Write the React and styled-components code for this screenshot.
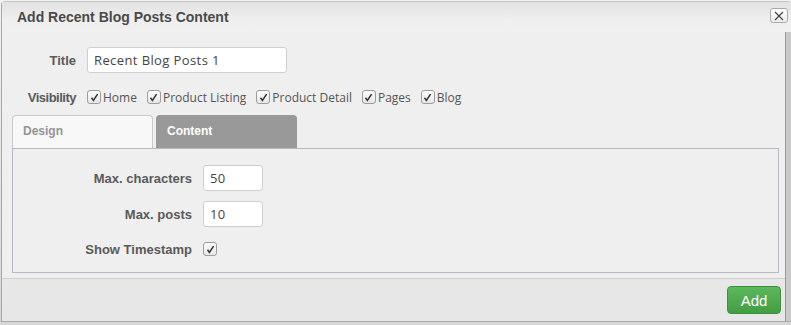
import React from "react";
import styled, { createGlobalStyle } from "styled-components";

const GlobalStyle = createGlobalStyle`
  html, body {
    margin: 0;
    padding: 0;
    background: #dcdcdc;
  }
  body {
    font-family: "Open Sans", "Liberation Sans", sans-serif;
    color: #444;
  }
`;

const Page = styled.div`
  width: 791px;
  height: 325px;
  overflow: hidden;
  padding-top: 1px;
  box-sizing: border-box;
  background: linear-gradient(#f2f2f2, #d6d6d6);
`;

const Dialog = styled.div`
  margin-left: 1px;
  width: 790px;
  height: 321px;
  display: flex;
  flex-direction: column;
  border-left: 1px solid #a8a8a8;
  border-top: 1px solid #c4c4c4;
  border-bottom: 1px solid #a8a8a8;
  border-radius: 4px 4px 0 0;
  background: #efefef;
  box-sizing: border-box;
`;

const Header = styled.div`
  height: 30px;
  display: flex;
  align-items: center;
  padding: 0 3px 0 15px;
  background: linear-gradient(#e2e2e2, #efefef 60%, #f0f0f0);
`;

const HeaderTitle = styled.div`
  font-family: "Liberation Sans", Arial, sans-serif;
  font-weight: bold;
  font-size: 14px;
  color: #4a4a4a;
  margin-top: -1px;
`;

const CloseButton = styled.button`
  margin-left: auto;
  width: 18px;
  height: 15px;
  padding: 0;
  display: flex;
  align-items: center;
  justify-content: center;
  border: 1px solid #aaa;
  border-radius: 3px;
  background: linear-gradient(#fff, #ececec);
  align-self: flex-start;
  margin-top: 6px;
`;

const Row = styled.div`
  flex: 1;
  display: flex;
`;

const Main = styled.div`
  flex: 1;
  display: flex;
  flex-direction: column;
`;

const Gutter = styled.div`
  width: 6px;
  background: linear-gradient(90deg, #9a9a9a 0 1px, #c9c9c9 1px);
`;

const Body = styled.div`
  padding: 15px 6px 0 10px;
`;

const FieldRow = styled.div`
  display: grid;
  grid-template-columns: ${(p) => p.$labelWidth}px auto;
  column-gap: 11px;
  align-items: center;
  height: ${(p) => p.$height}px;
  margin-bottom: ${(p) => p.$gap || 0}px;
`;

const Label = styled.div`
  font-family: "Liberation Sans", Arial, sans-serif;
  font-weight: bold;
  font-size: 13px;
  letter-spacing: ${(p) => p.$tight ? "-0.5px" : "0"};
  color: #5a5a5a;
  text-align: right;
`;

const TextInput = styled.input`
  width: ${(p) => p.$width}px;
  height: 26px;
  box-sizing: border-box;
  border: 1px solid #cfcfcf;
  border-radius: 3px;
  background: #fff;
  padding: 0 6px;
  font-family: "Open Sans", sans-serif;
  font-size: 13px;
  letter-spacing: 0.4px;
  color: #444;
  outline: none;
`;

const CheckList = styled.div`
  display: flex;
  align-items: center;
  gap: 10px;
`;

const CheckItem = styled.label`
  display: flex;
  align-items: center;
  gap: 2px;
  font-family: "Open Sans", sans-serif;
  font-size: 12px;
  color: #555;
`;

const Box = styled.span`
  width: 14px;
  height: 14px;
  box-sizing: border-box;
  border: 1px solid #9c9c9c;
  border-radius: 3px;
  background: linear-gradient(#fdfdfd, #e6e6e6);
  display: inline-flex;
  align-items: center;
  justify-content: center;
`;

const Tabs = styled.div`
  display: flex;
  gap: 3px;
  margin-top: 8px;
  height: 33px;
`;

const Tab = styled.div`
  width: ${(p) => p.$width}px;
  box-sizing: border-box;
  padding: 8px 10px 0;
  border-radius: 4px 4px 0 0;
  font-family: "Liberation Sans", Arial, sans-serif;
  font-weight: bold;
  font-size: 12px;
  background: ${(p) => (p.$active ? "#999" : "#f8f8f8")};
  color: ${(p) => (p.$active ? "#fff" : "#949494")};
  border: 1px solid ${(p) => (p.$active ? "#999" : "#cacaca")};
  border-bottom: none;
`;

const Panel = styled.div`
  border: 1px solid #b9b9c6;
  padding: 16px 0 11px;
  background: #efefef;
`;

const Footer = styled.div`
  margin-top: 5px;
  flex: 1;
  border-top: 1px solid #d0d0d0;
  background: #e7e7e7;
  display: flex;
  justify-content: flex-end;
  align-items: flex-start;
  padding: 7px 4px 0 0;
`;

const AddButton = styled.button`
  width: 54px;
  height: 28px;
  border: 1px solid #3e8f3e;
  border-radius: 4px;
  background: linear-gradient(#5cb85c, #449d44);
  color: #fff;
  font-family: "Liberation Sans", Arial, sans-serif;
  font-size: 15px;
  padding: 0;
`;

function Check() {
  return (
    <Box>
      <svg width="9" height="9" viewBox="0 0 9 9">
        <path d="M1.5 4.8 L3.4 7.4 L7.6 1.2" fill="none" stroke="#333" strokeWidth="1.5" />
      </svg>
    </Box>
  );
}

const pages = ["Home", "Product Listing", "Product Detail", "Pages", "Blog"];

export default function App() {
  return (
    <Page>
      <GlobalStyle />
      <Dialog>
        <Header>
          <HeaderTitle>Add Recent Blog Posts Content</HeaderTitle>
          <CloseButton>
            <svg width="10" height="10" viewBox="0 0 10 10">
              <path d="M1 1 L9 9 M9 1 L1 9" stroke="#444" strokeWidth="1.2" />
            </svg>
          </CloseButton>
        </Header>
        <Row>
          <Main>
            <Body>
              <FieldRow $labelWidth={64} $height={26} $gap={14}>
                <Label>Title</Label>
                <TextInput $width={200} defaultValue="Recent Blog Posts 1" />
              </FieldRow>
              <FieldRow $labelWidth={64} $height={20}>
                <Label $tight>Visibility</Label>
                <CheckList>
                  {pages.map((p) => (
                    <CheckItem key={p}>
                      <Check />
                      {p}
                    </CheckItem>
                  ))}
                </CheckList>
              </FieldRow>
              <Tabs>
                <Tab $width={141}>Design</Tab>
                <Tab $width={141} $active>Content</Tab>
              </Tabs>
              <Panel>
                <FieldRow $labelWidth={179} $height={26} $gap={10}>
                  <Label>Max. characters</Label>
                  <TextInput $width={60} defaultValue="50" />
                </FieldRow>
                <FieldRow $labelWidth={179} $height={26} $gap={10}>
                  <Label>Max. posts</Label>
                  <TextInput $width={60} defaultValue="10" />
                </FieldRow>
                <FieldRow $labelWidth={179} $height={24}>
                  <Label>Show Timestamp</Label>
                  <Check />
                </FieldRow>
              </Panel>
            </Body>
            <Footer>
              <AddButton>Add</AddButton>
            </Footer>
          </Main>
          <Gutter />
        </Row>
      </Dialog>
    </Page>
  );
}
